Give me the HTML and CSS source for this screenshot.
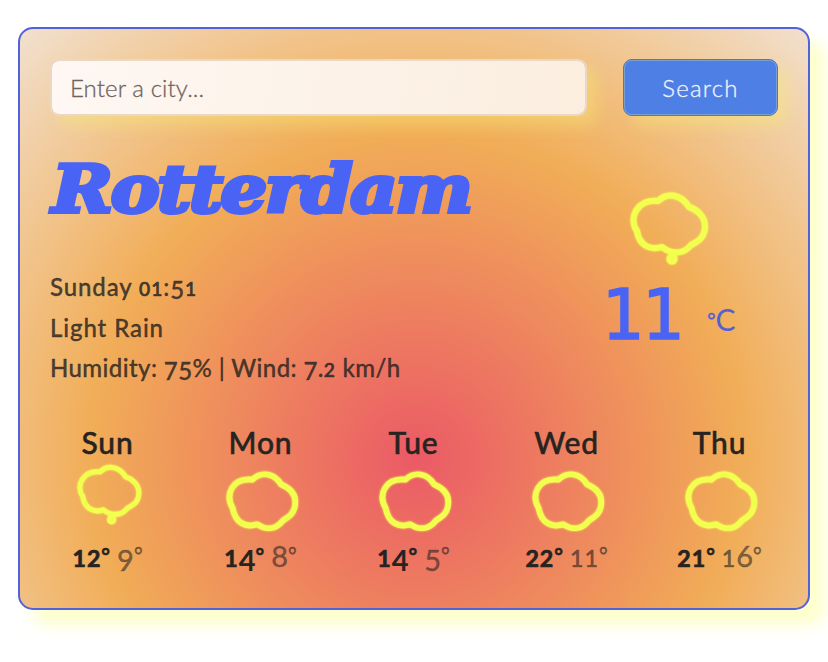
FILE: index.html
```html
<!DOCTYPE html>
<html lang="en">
<head>
<meta charset="utf-8">
<title>Weather</title>
<link rel="stylesheet" href="styles.css">
</head>
<body>
<svg width="0" height="0" class="defs">
  <symbol id="cloud" viewBox="0 0 80 66"><path d="M29 11C38 2 52 4 59 16C66 19 74 25 74 34C74 46 68 50 61 54C54 63 44 65 34 58C22 62 11 57 8 41C0 27 7 9 29 11Z"/></symbol>
  <symbol id="rain" viewBox="0 0 88 80"><path d="M32 12C41 3 55 5 63 18C70 20 79 27 79 37C79 48 73 52 65 56C58 65 46 66 36 58C24 62 13 56 11 42C2 29 11 10 32 12Z"/><circle class="drop" cx="46" cy="70" r="5.5"/></symbol>
</svg>
<main class="card">
  <form class="search">
    <input class="field" type="text" placeholder="Enter a city...">
    <button class="button" type="button">Search</button>
  </form>
  <section class="current">
    <div class="info">
      <h1><span class="city">Rotterdam</span></h1>
      <p class="l1">Sunday <span class="x">01</span>:<span class="d">5</span><span class="x">1</span></p>
      <p class="l2">Light Rain</p>
      <p class="l3">Humidity: <span class="d">75</span>% | Wind: <span class="d">7</span>.<span class="x">2</span> km/h</p>
    </div>
    <div class="now">
      <svg class="icon big"><use href="#rain"/></svg>
      <div class="reading"><span class="degrees">11</span><span class="unit"><small>°</small>C</span></div>
    </div>
  </section>
  <section class="forecast">
    <div class="day"><h2>Sun</h2><svg class="icon wet"><use href="#rain"/></svg><div class="temps"><b><span class="x">12</span><small>°</small></b><i><span class="d">9</span><small>°</small></i></div></div>
    <div class="day"><h2>Mon</h2><svg class="icon"><use href="#cloud"/></svg><div class="temps"><b><span class="x">1</span><span class="d">4</span><small>°</small></b><i>8<small>°</small></i></div></div>
    <div class="day"><h2>Tue</h2><svg class="icon"><use href="#cloud"/></svg><div class="temps"><b><span class="x">1</span><span class="d">4</span><small>°</small></b><i><span class="d">5</span><small>°</small></i></div></div>
    <div class="day"><h2>Wed</h2><svg class="icon"><use href="#cloud"/></svg><div class="temps"><b><span class="x">22</span><small>°</small></b><i><span class="x">11</span><small>°</small></i></div></div>
    <div class="day"><h2>Thu</h2><svg class="icon"><use href="#cloud"/></svg><div class="temps"><b><span class="x">21</span><small>°</small></b><i><span class="x">1</span>6<small>°</small></i></div></div>
  </section>
</main>
</body>
</html>
```
FILE: styles.css
```css
* { box-sizing: border-box; }
body { display: flow-root; height: 662px; margin: 0; background: #fff; font-family: Lato, sans-serif; color: #272320; }
h1, h2, p { margin: 0; }
.defs { display: block; }
.card {
  width: 792px; height: 583px; margin: 27px 0 0 18px; padding: 30px 30px 0;
  border: 2px solid #5261dc; border-radius: 15px;
  background: radial-gradient(circle 590px at 396px 430px, #eb5a66 0%, #f1ad57 55%, #f1e2d2 100%);
  box-shadow: 15px 15px 15px rgba(250, 255, 130, .42);
}
.search { display: flex; gap: 36px; }
.field, .button {
  height: 57px; border-radius: 9px; font: 300 24px Lato, sans-serif;
  box-shadow: 10px 10px 15px rgba(246, 240, 110, .38);
}
.field { width: 537px; padding: 0 18px; border: 2px solid #ead8c4; background: linear-gradient(100deg, #fef7f3, #fbeedf); background-clip: padding-box; letter-spacing: .1px; }
.field::placeholder { color: #6e645c; opacity: 1; -webkit-text-stroke: .3px; }
.button { width: 155px; border: 1px solid #5078bb; outline: 1px solid #7d9fce; outline-offset: -2px; background: #4d7fe4; color: #eef4ff; letter-spacing: 1.2px; -webkit-text-stroke: .3px; }
.current { display: flex; justify-content: space-between; height: 304px; }
.info { width: 430px; white-space: nowrap; font-weight: 500; font-size: 24px; color: rgba(39, 35, 32, .82); -webkit-text-stroke: .35px; }
h1 { height: 151px; font: italic 700 66px/80px "DejaVu Serif", serif; padding-top: 33px; }
.city { display: inline-block; color: #4964f5; -webkit-text-stroke: 4px #4964f5; stroke-linejoin: round; transform-origin: left center; transform: scaleX(1.11); letter-spacing: -2px; margin-left: 2px; }
.info p { height: 40.5px; line-height: 40.5px; width: max-content; }
.l1 { letter-spacing: .9px; }
.l2 { letter-spacing: .9px; }
.l3 { letter-spacing: .4px; }
.x { font-size: .8em; line-height: 1; letter-spacing: 1px; -webkit-text-stroke: .7px; }
.d { position: relative; top: .13em; }
small { font-size: .72em; line-height: 1; position: relative; top: -.2em; -webkit-text-stroke: .5px; }
.now { width: 190px; padding-top: 73px; }
.icon { display: block; width: 76px; height: 63px; margin: 3px 0 0 5px; fill: none; stroke: #f3ff4e; stroke-width: 6; stroke-linejoin: round; filter: drop-shadow(0 0 1px #f3ff4e); overflow: visible; }
.icon .drop, .drop { fill: #f3ff4e; stroke: none; }
.big { width: 88px; height: 80px; margin: 0 0 0 38px; }
.reading { display: flex; color: #4964f5; height: 78px; }
.degrees { font: 70px/93px "DejaVu Sans Mono", monospace; margin-left: 13px; letter-spacing: -2px; -webkit-text-stroke: 1.5px; }
.unit { font-size: 30px; line-height: 100px; margin-left: 26px; color: #565fd5; }
.unit small { font-size: 20px; }
.forecast { display: grid; grid-template-columns: repeat(5, 153px); margin-left: -19px; }
.day { display: flex; flex-direction: column; align-items: center; }
h2 { height: 46px; font: 500 30px/44px Lato, sans-serif; letter-spacing: .8px; -webkit-text-stroke: .5px; }
.day .wet { width: 74px; height: 66px; margin: 0; position: relative; top: -4px; left: 2px; }
.temps { height: 48px; line-height: 48px; font-size: 29px; display: flex; gap: 7px; }
.temps i { font-style: normal; color: rgba(39, 35, 32, .57); -webkit-text-stroke: .4px; }
```
